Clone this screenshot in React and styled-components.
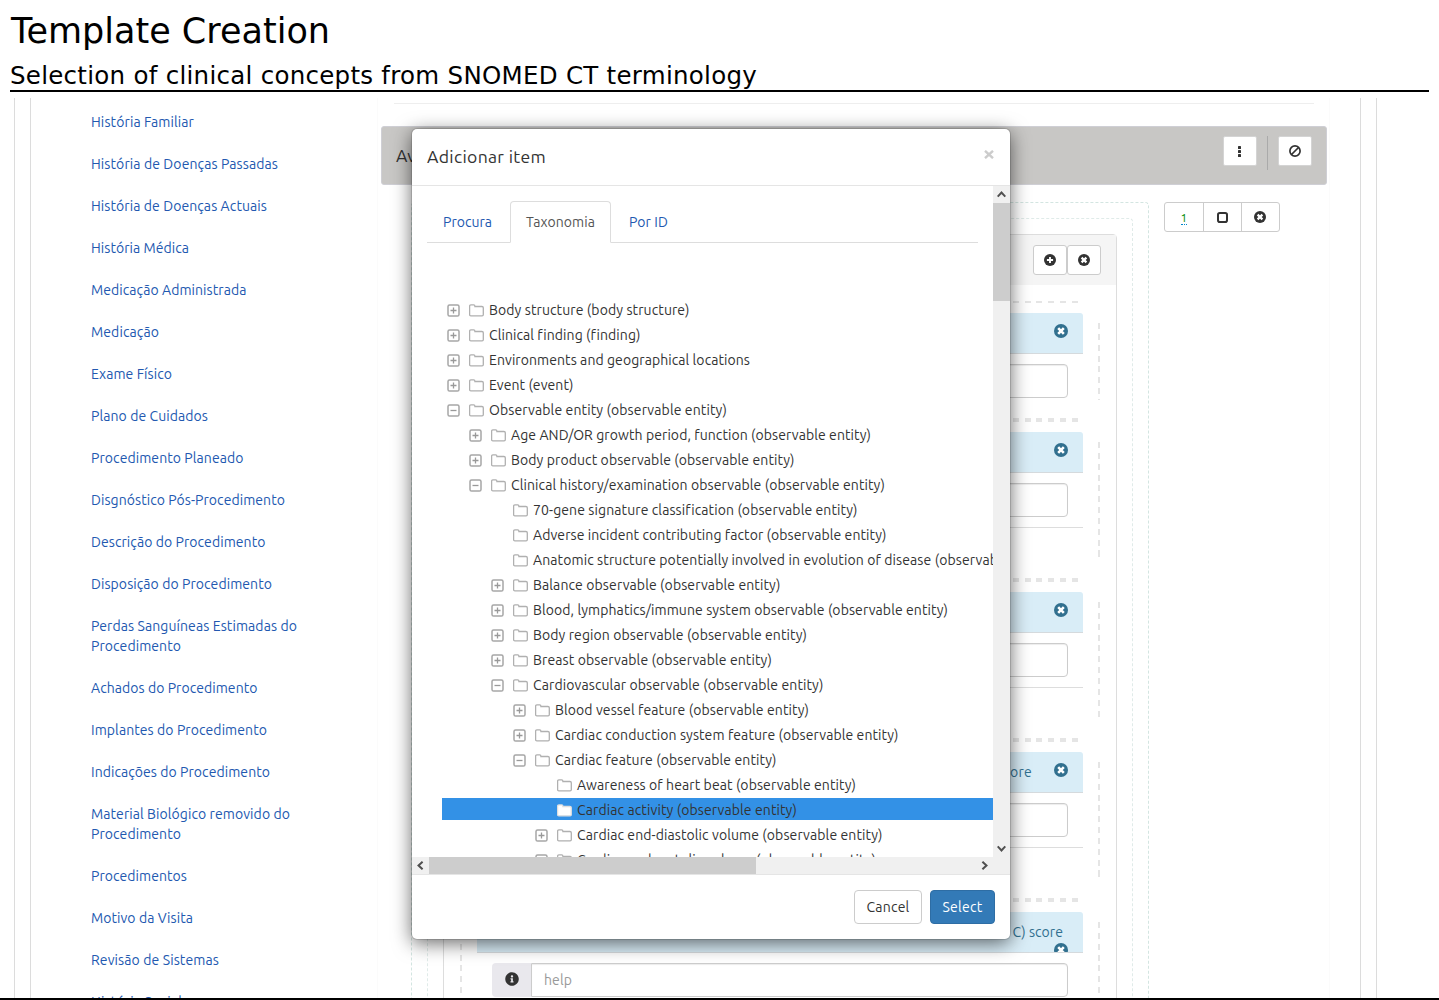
import React, { useLayoutEffect, useRef } from "react";
import styled, { createGlobalStyle } from "styled-components";
import { FaInfoCircle } from "react-icons/fa";

const Global = createGlobalStyle`
  * { box-sizing: border-box; }
  body { margin: 0; background: #fff; }
  button { font: inherit; cursor: pointer; }
`;

const Page = styled.div`
  width: 1439px;
  height: 1000px;
  display: flex;
  flex-direction: column;
  overflow: hidden;
  border-bottom: 2px solid #000;
  font: 14px/20px Ubuntu, "Noto Sans", sans-serif;
  color: #333;
`;

const FitText = styled.span`
  display: inline-block;
  white-space: nowrap;
`;

/* Spreads a line of text over a given width through its letter spacing. */
function Fit({ w, children }) {
  const ref = useRef(null);
  useLayoutEffect(() => {
    const el = ref.current;
    el.style.letterSpacing = "0px";
    const natural = el.getBoundingClientRect().width;
    el.style.letterSpacing = `${(w - natural) / children.length}px`;
  }, [w, children]);
  return <FitText ref={ref}>{children}</FitText>;
}

const Header = styled.header`
  flex: none;
  height: 92px;
  margin: 0 10px;
  border-bottom: 2px solid #000;
  color: #000;
  font-family: "DejaVu Sans", sans-serif;
`;
const Title = styled.h1`
  margin: 0;
  padding: 8px 0 0 1px;
  font-size: 35px;
  line-height: 46px;
  font-weight: 400;
`;
const Subtitle = styled.h2`
  margin: 0;
  padding-top: 6px;
  font-size: 24.5px;
  line-height: 32px;
  font-weight: 400;
`;

const Body = styled.div`
  flex: 1;
  min-height: 0;
  margin: 6px 62px 0 14px;
  padding: 0 15px;
  border: solid #dcdcdc;
  border-width: 0 1px;
  overflow: hidden;
`;
const Frame = styled.div`
  height: 900px;
  border: solid #dcdcdc;
  border-width: 0 1px;
  display: flex;
`;

const Sidebar = styled.nav`
  width: 347px;
  flex: none;
  padding: 3px 0 0 60px;
  border-right: 1px solid #fbfbfb;
`;
const NavLink = styled.a`
  display: flex;
  flex-direction: column;
  align-items: flex-start;
  padding: 11px 0;
  color: #2258b0;
`;

const Main = styled.main`
  width: 952px;
  flex: none;
  padding: 5px 5px 0 3px;
  border-right: 1px solid #fbfbfb;
`;
const Rule = styled.hr`
  margin: 0 10px 22px 13px;
  border: 0;
  border-top: 1px solid #eee;
`;
const SectionBar = styled.div`
  width: 946px;
  height: 59px;
  display: flex;
  align-items: flex-start;
  padding: 9px 14px 0;
  background: #c8c7c5;
  border: 1px solid #cfcfd5;
  border-radius: 3px;
`;
const SectionName = styled.span`
  flex: 1;
  padding-top: 10px;
  font-size: 17.6px;
`;
const SquareButton = styled.button`
  width: ${(p) => p.$w || 34}px;
  height: 30px;
  padding: 0;
  display: flex;
  align-items: center;
  justify-content: center;
  background: #fff;
  border: 1px solid ${(p) => (p.$bare ? "#d4d4d4" : "#ccc")};
  border-radius: ${(p) => (p.$bare ? 2 : 3)}px;
  color: #333;
`;
const Divider = styled.span`
  width: 1px;
  height: 34px;
  margin: 0 10px;
  background: #aaa;
`;

const Workspace = styled.div`
  display: flex;
  align-items: flex-start;
  gap: 15px;
  margin: 17px 0 0 30px;
`;
const DashedBox = styled.div`
  border: 1px dashed ${(p) => p.$tone};
  border-bottom: 0;
  border-radius: 4px 4px 0 0;
  padding: 15px 15px 0;
  width: ${(p) => p.$w}px;
  flex: none;
`;
const Panel = styled.section`
  width: 674px;
  border: 1px solid #ddd;
  border-radius: 4px 4px 0 0;
`;
const PanelHead = styled.div`
  height: 50px;
  padding: 10px 15px;
  display: flex;
  justify-content: flex-end;
  background: #f5f5f5;
`;
const PanelBody = styled.div`
  padding: 16px;
`;

const dashH = "repeating-linear-gradient(90deg, #e5e5e5 0 6px, transparent 6px 11.75px)";
const dashV = "repeating-linear-gradient(180deg, #e5e5e5 0 6px, transparent 6px 10.85px)";
const Card = styled.article`
  width: 640px;
  height: ${(p) => p.$h}px;
  padding: 12px 17px 0;
  background:
    ${dashH} 24px 0 / 598px 2px no-repeat,
    ${dashH} 24px 100% / 598px 2px no-repeat,
    ${dashV} 0 22px / 2px calc(100% - 42px) no-repeat,
    ${dashV} 100% 22px / 2px calc(100% - 42px) no-repeat;
`;
const CardInner = styled.div`
  height: ${(p) => (p.$line ? "96px" : "auto")};
  border-bottom: ${(p) => (p.$line ? "1px solid #ddd" : "0")};
`;
const CardHead = styled.div`
  height: 41px;
  padding: 10px 15px 0;
  display: flex;
  flex-wrap: wrap;
  justify-content: flex-end;
  align-items: flex-start;
  align-content: flex-start;
  gap: 0 22px;
  overflow: hidden;
  background: #d9edf7;
  border-bottom: 1px solid #d5dadd;
  border-radius: 3px 3px 0 0;
  color: #31708f;
`;
const CardLabel = styled.span`
  flex: 0 0 ${(p) => (p.$wide ? "100%" : "auto")};
  padding-right: ${(p) => (p.$wide ? 5 : 0)}px;
  text-align: right;
`;
const MarkSlot = styled.span`
  display: flex;
  padding-top: 1px;
`;
const Field = styled.div`
  display: flex;
  height: 34px;
  margin: 10px 15px 0;
`;
const FieldAddon = styled.span`
  width: 39px;
  display: flex;
  align-items: center;
  justify-content: center;
  padding: 0 0 2px 1px;
  background: #e9e8ed;
  border-radius: 4px 0 0 4px;
`;
const FieldBox = styled.div`
  flex: 1;
  padding: 6px 12px;
  background: #fff;
  border: 1px solid #ccc;
  border-radius: 0 4px 4px 0;
  box-shadow: inset 0 1px 1px rgba(0, 0, 0, 0.075);
  color: #999;
`;

const ButtonGroup = styled.div`
  display: flex;
  height: 30px;
  border: 1px solid #ccc;
  border-radius: 3px;
`;
const GroupCell = styled.span`
  width: ${(p) => p.$w}px;
  display: flex;
  align-items: center;
  justify-content: center;
  & + & { border-left: 1px solid #ccc; padding-right: 1px; }
`;
const Count = styled.span`
  color: #008a00;
  font-size: 12px;
  line-height: 13px;
  margin-top: 2px;
  border-bottom: 1px dotted #0088cc;
`;

const Modal = styled.div`
  position: absolute;
  left: 412px;
  top: 129px;
  width: 598px;
  height: 810px;
  display: flex;
  flex-direction: column;
  background: #fff;
  border-radius: 5px;
  box-shadow: 0 0 0 1px rgba(0, 0, 0, 0.12), 0 4px 19px rgba(0, 0, 0, 0.6);
  overflow: hidden;
`;
const ModalHead = styled.div`
  height: 57px;
  flex: none;
  padding: 18px 15px 0;
  display: flex;
  justify-content: space-between;
  border-bottom: 1px solid #e5e5e5;
  font-size: 17.6px;
`;
const Close = styled.span`
  width: 12px;
  height: 12px;
  margin-top: 1px;
  display: flex;
  justify-content: center;
  align-items: center;
  color: #ccc;
`;
const Scroller = styled.div`
  display: grid;
  grid-template-columns: 581px 17px;
  grid-template-rows: 671px 17px;
  flex: none;
`;
const Viewport = styled.div`
  overflow: hidden;
  padding-left: 15px;
`;
const Tabs = styled.div`
  display: flex;
  align-items: flex-end;
  width: 551px;
  height: 57px;
  border-bottom: 1px solid #ddd;
`;
const Tab = styled.a`
  height: 42px;
  margin: 0 2px -1px 0;
  padding: 10px 15px;
  border: 1px solid ${(p) => (p.$active ? "#ddd" : "transparent")};
  border-bottom-color: ${(p) => (p.$active ? "#fff" : "transparent")};
  border-radius: 4px 4px 0 0;
  color: ${(p) => (p.$active ? "#555" : "#2258b0")};
`;
const Tree = styled.ul`
  list-style: none;
  margin: 55px 0 0 15px;
  padding: 0;
`;
const TreeRow = styled.li`
  height: 22px;
  margin-bottom: 3px;
  padding: 2px 0 0 ${(p) => 5 + p.$level * 22}px;
  display: flex;
  align-items: center;
  white-space: nowrap;
  background: ${(p) => (p.$selected ? "#3391e6" : "transparent")};
`;
const Slot = styled.span`
  width: ${(p) => p.$w}px;
  flex: none;
  display: flex;
`;

const Track = styled.div`
  display: flex;
  flex-direction: ${(p) => (p.$vertical ? "column" : "row")};
  justify-content: space-between;
  background: #f0f0f0;
`;
const ThumbGroup = styled.div`
  display: flex;
  flex-direction: inherit;
`;
const Arrow = styled.span`
  width: 17px;
  height: 17px;
  display: flex;
  align-items: center;
  justify-content: center;
`;
const Thumb = styled.span`
  width: ${(p) => p.$w}px;
  height: ${(p) => p.$h}px;
  background: #cdcdcd;
`;
const Corner = styled.div`
  background: #f0f0f0;
`;
const ModalFoot = styled.div`
  flex: 1;
  display: flex;
  justify-content: flex-end;
  gap: 8px;
  padding: 15px 15px 0;
  border-top: 1px solid #e5e5e5;
`;
const Action = styled.button`
  width: ${(p) => p.$w}px;
  height: 34px;
  padding: 0;
  border: 1px solid ${(p) => (p.$primary ? "#2e6da4" : "#ccc")};
  border-radius: 4px;
  background: ${(p) => (p.$primary ? "#337ab7" : "#fff")};
  color: ${(p) => (p.$primary ? "#fff" : "#333")};
`;

const Toggle = ({ open }) => (
  <svg width="13" height="13" viewBox="0 0 13 13" fill="none">
    <rect x="1" y="1" width="11" height="11" rx="1.6" stroke="#a6a6a6" strokeWidth="1.5" />
    <path d={open ? "M3.5 6.5h6" : "M3.5 6.5h6M6.5 3.5v6"} stroke="#999" strokeWidth="1.3" />
  </svg>
);
const Folder = ({ filled }) => (
  <svg width="15" height="13" viewBox="0 0 15 13">
    <path
      d="M.6 10.8V2.2Q.6.9 1.9.9h2.8q1.2 0 1.2 1.3v.3h7q1.4 0 1.4 1.3v7q0 1-1.2 1H1.8Q.6 11.8.6 10.8Z"
      fill={filled ? "#fff" : "none"}
      stroke={filled ? "#dedede" : "#b0b0b0"}
      strokeWidth="1.3"
    />
  </svg>
);
const Chevron = ({ turn }) => (
  <svg width="9" height="9" viewBox="0 0 9 9">
    <path d="M.7 6.6 4.5 2.5l3.8 4.1" fill="none" stroke="#505050" strokeWidth="2" transform={`rotate(${turn} 4.5 4.5)`} />
  </svg>
);
const RoundMark = ({ size = 12, plus }) => (
  <svg width={size} height={size} viewBox="0 0 14 14">
    <circle cx="7" cy="7" r="7" fill="currentColor" />
    <path d={plus ? "M3.4 7h7.2M7 3.4v7.2" : "m4.2 4.2 5.6 5.6M9.8 4.2 4.2 9.8"} stroke="#fff" strokeWidth={plus ? 2.2 : 2.6} />
  </svg>
);
const Dots = () => (
  <svg width="4" height="11" viewBox="0 0 4 11" fill="#333">
    <rect width="3" height="3" rx=".6" />
    <rect y="4" width="3" height="3" rx=".6" />
    <rect y="8" width="3" height="3" rx=".6" />
  </svg>
);
const Ban = () => (
  <svg width="12" height="12" viewBox="0 0 12 12" fill="none" stroke="#333" strokeWidth="1.7">
    <circle cx="6" cy="6" r="5.1" />
    <path d="m2.5 9.5 7-7" />
  </svg>
);
const Box = () => (
  <svg width="11" height="11" viewBox="0 0 11 11" fill="none">
    <rect x="1" y="1" width="9" height="9" rx="1.8" stroke="#333" strokeWidth="2" />
  </svg>
);

const links = [
  [["História Familiar", 103]],
  [["História de Doenças Passadas", 187]],
  [["História de Doenças Actuais", 176]],
  [["História Médica", 98]],
  [["Medicação Administrada", 155.5]],
  [["Medicação", 68]],
  [["Exame Físico", 81]],
  [["Plano de Cuidados", 117]],
  [["Procedimento Planeado", 152.5]],
  [["Disgnóstico Pós-Procedimento", 194]],
  [["Descrição do Procedimento", 174.5]],
  [["Disposição do Procedimento", 181]],
  [["Perdas Sanguíneas Estimadas do", 206], ["Procedimento", 90]],
  [["Achados do Procedimento", 166.5]],
  [["Implantes do Procedimento", 176]],
  [["Indicações do Procedimento", 179]],
  [["Material Biológico removido do", 199], ["Procedimento", 90]],
  [["Procedimentos", 96]],
  [["Motivo da Visita", 102]],
  [["Revisão de Sistemas", 128]],
  [["História Social", 91]],
];

/* level, state of the toggle (+ closed, - open, blank for a leaf), label, width */
const tree = [
  [0, "+", "Body structure (body structure)", 200.5],
  [0, "+", "Clinical finding (finding)", 150.5],
  [0, "+", "Environments and geographical locations", 261],
  [0, "+", "Event (event)", 84.5],
  [0, "-", "Observable entity (observable entity)", 238],
  [1, "+", "Age AND/OR growth period, function (observable entity)", 360],
  [1, "+", "Body product observable (observable entity)", 283.5],
  [1, "-", "Clinical history/examination observable (observable entity)", 374],
  [2, "", "70-gene signature classification (observable entity)", 324],
  [2, "", "Adverse incident contributing factor (observable entity)", 353.5],
  [2, "", "Anatomic structure potentially involved in evolution of disease (observable entity)", 522],
  [2, "+", "Balance observable (observable entity)", 247.5],
  [2, "+", "Blood, lymphatics/immune system observable (observable entity)", 415],
  [2, "+", "Body region observable (observable entity)", 274],
  [2, "+", "Breast observable (observable entity)", 239],
  [2, "-", "Cardiovascular observable (observable entity)", 290.5],
  [3, "+", "Blood vessel feature (observable entity)", 254],
  [3, "+", "Cardiac conduction system feature (observable entity)", 343.5],
  [3, "-", "Cardiac feature (observable entity)", 221.5],
  [4, "", "Awareness of heart beat (observable entity)", 279],
  [4, "", "Cardiac activity (observable entity)", 220, true],
  [4, "+", "Cardiac end-diastolic volume (observable entity)", 305.5],
  [4, "+", "Cardiac end-systolic volume (observable entity)", 299],
];

const cards = [
  { h: 119 },
  { h: 160, line: true },
  { h: 160, line: true },
  { h: 160, line: true, label: "score", w: 35 },
  { h: 160, line: true, label: "C) score", w: 50.5, wide: true, placeholder: "help" },
];

export default function App() {
  return (
    <Page>
      <Global />
      <Header>
        <Title><Fit w={319}>Template Creation</Fit></Title>
        <Subtitle><Fit w={747}>Selection of clinical concepts from SNOMED CT terminology</Fit></Subtitle>
      </Header>
      <Body>
        <Frame>
          <Sidebar>
            {links.map((lines, i) => (
              <NavLink key={i}>
                {lines.map(([text, w]) => <Fit key={text} w={w}>{text}</Fit>)}
              </NavLink>
            ))}
          </Sidebar>
          <Main>
            <Rule />
            <SectionBar>
              <SectionName>Av</SectionName>
              <SquareButton $bare><Dots /></SquareButton>
              <Divider />
              <SquareButton $bare><Ban /></SquareButton>
            </SectionBar>
            <Workspace>
              <DashedBox $w={738} $tone="#d3e5e1">
                <DashedBox $w={706} $tone="#e0ebe9">
                  <Panel>
                    <PanelHead>
                      <SquareButton><RoundMark plus /></SquareButton>
                      <SquareButton><RoundMark /></SquareButton>
                    </PanelHead>
                    <PanelBody>
                      {cards.map((c, i) => (
                        <Card key={i} $h={c.h}>
                          <CardInner $line={c.line}>
                            <CardHead>
                              {c.label && <CardLabel $wide={c.wide}><Fit w={c.w}>{c.label}</Fit></CardLabel>}
                              <MarkSlot><RoundMark size={14} /></MarkSlot>
                            </CardHead>
                            <Field>
                              <FieldAddon><FaInfoCircle size={14} /></FieldAddon>
                              <FieldBox>{c.placeholder && <Fit w={28}>{c.placeholder}</Fit>}</FieldBox>
                            </Field>
                          </CardInner>
                        </Card>
                      ))}
                    </PanelBody>
                  </Panel>
                </DashedBox>
              </DashedBox>
              <ButtonGroup>
                <GroupCell $w={38}><Count>1</Count></GroupCell>
                <GroupCell $w={38}><Box /></GroupCell>
                <GroupCell $w={38}><RoundMark /></GroupCell>
              </ButtonGroup>
            </Workspace>
          </Main>
        </Frame>
      </Body>
      <Modal>
        <ModalHead>
          <Fit w={119}>Adicionar item</Fit>
          <Close>
            <svg width="10" height="9" viewBox="0 0 10 9"><path d="m1 .8 8 7.4M9 .8 1 8.2" stroke="currentColor" strokeWidth="2.4" /></svg>
          </Close>
        </ModalHead>
        <Scroller>
          <Viewport>
            <Tabs>
              <Tab><Fit w={49}>Procura</Fit></Tab>
              <Tab $active><Fit w={69}>Taxonomia</Fit></Tab>
              <Tab><Fit w={39}>Por ID</Fit></Tab>
            </Tabs>
            <Tree>
              {tree.map(([level, mark, label, w, selected]) => (
                <TreeRow key={label} $level={level} $selected={selected}>
                  <Slot $w={22}>{mark && <Toggle open={mark === "-"} />}</Slot>
                  <Slot $w={20}><Folder filled={selected} /></Slot>
                  <Fit w={w}>{label}</Fit>
                </TreeRow>
              ))}
            </Tree>
          </Viewport>
          <Track $vertical>
            <ThumbGroup>
              <Arrow><Chevron turn={0} /></Arrow>
              <Thumb $w={17} $h={98} />
            </ThumbGroup>
            <Arrow><Chevron turn={180} /></Arrow>
          </Track>
          <Track>
            <ThumbGroup>
              <Arrow><Chevron turn={-90} /></Arrow>
              <Thumb $w={327} $h={17} />
            </ThumbGroup>
            <Arrow><Chevron turn={90} /></Arrow>
          </Track>
          <Corner />
        </Scroller>
        <ModalFoot>
          <Action $w={68}><Fit w={43}>Cancel</Fit></Action>
          <Action $w={65} $primary><Fit w={40}>Select</Fit></Action>
        </ModalFoot>
      </Modal>
    </Page>
  );
}
